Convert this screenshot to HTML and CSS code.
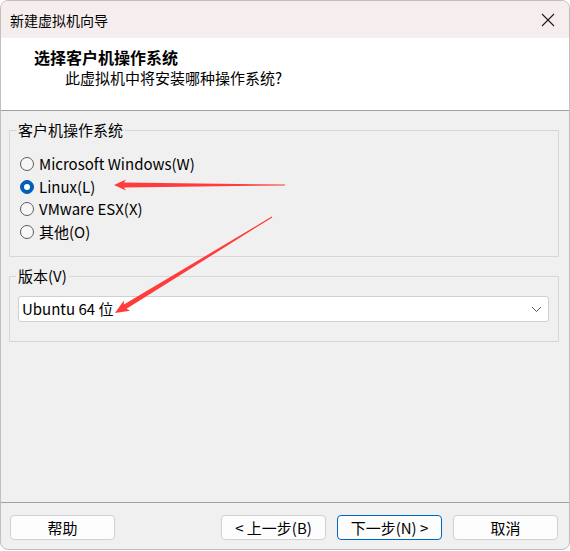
FILE: index.html
```html
<!DOCTYPE html>
<html lang="zh-CN">
<head>
<meta charset="utf-8">
<title>新建虚拟机向导</title>
<link rel="stylesheet" href="styles.css">
</head>
<body>
<div class="window">
  <div class="titlebar">
    <span class="title">新建虚拟机向导</span>
    <svg class="close" width="14" height="14" viewBox="0 0 14 14"><path d="M1 1L13 13M13 1L1 13" stroke="#1b1b1b" stroke-width="1.1" fill="none"/></svg>
  </div>
  <div class="header">
    <div class="h-title">选择客户机操作系统</div>
    <div class="h-sub">此虚拟机中将安装哪种操作系统?</div>
  </div>
  <div class="content">
    <fieldset class="group">
      <legend>客户机操作系统</legend>
      <div class="radios">
        <div class="radio-row"><span class="radio"></span><span>Microsoft Windows(W)</span></div>
        <div class="radio-row"><span class="radio checked"></span><span>Linux(L)</span></div>
        <div class="radio-row"><span class="radio"></span><span>VMware ESX(X)</span></div>
        <div class="radio-row"><span class="radio"></span><span>其他(O)</span></div>
      </div>
    </fieldset>
    <fieldset class="group">
      <legend>版本(V)</legend>
      <div class="version">
        <div class="combo">
          <span>Ubuntu 64 位</span>
          <svg class="chev" width="11" height="7" viewBox="0 0 11 7"><path d="M1 1L5.5 5.5L10 1" stroke="#5a5a5a" stroke-width="1" fill="none"/></svg>
        </div>
      </div>
    </fieldset>
  </div>
  <div class="footer">
    <div class="btn">帮助</div>
    <div class="spacer"></div>
    <div class="btn">&lt; 上一步(B)</div>
    <div class="btn primary">下一步(N) &gt;</div>
    <div class="btn">取消</div>
  </div>
  <svg class="annot" width="570" height="550" viewBox="0 0 570 550">
    <polygon fill="#ff3b3b" points="114,185 126,179.5 124,182.6 285,184.6 285,185.4 124,187.4 126,190.5"/>
    <polygon fill="#ff3b3b" points="115,313 123.8,300.6 123.9,304.6 271.7,216.6 272.3,217.4 126.5,308.8 130.1,310.8"/>
  </svg>
</div>
</body>
</html>
```

FILE: styles.css
```css
html, body {
  margin: 0;
  padding: 0;
  background: #ffffff;
}

body {
  font-family: "Microsoft YaHei UI", "Noto Sans CJK SC", sans-serif;
  font-size: 15px;
  color: #000000;
}

.window {
  position: relative;
  width: 570px;
  height: 550px;
  box-sizing: border-box;
  border: 1px solid #bfbfbf;
  border-radius: 8px;
  overflow: hidden;
  background: #f0f0f0;
  display: flex;
  flex-direction: column;
}

.titlebar {
  height: 37px;
  flex: none;
  background: #f6eeee;
  display: flex;
  align-items: center;
  justify-content: space-between;
  padding: 0 14px 0 9px;
  line-height: 20px;
}

.title {
  font-size: 14px;
}

.close {
  display: block;
}

.header {
  flex: none;
  height: 73px;
  box-sizing: border-box;
  background: #ffffff;
  border-bottom: 1px solid #a0a0a0;
  padding: 9px 0 0 33px;
}

.h-title {
  font-weight: bold;
  font-size: 16px;
  line-height: 20px;
}

.h-sub {
  line-height: 20px;
  margin-top: 1px;
  padding-left: 31px;
}

.content {
  flex: 1;
  padding: 9px 10px 0 8px;
  display: flex;
  flex-direction: column;
  gap: 9px;
}

.group {
  margin: 0;
  padding: 0;
  border: 1px solid #d7d7d7;
  min-width: 0;
}

.group legend {
  margin-left: 6px;
  padding: 0 2px;
  line-height: 20px;
}

.radios {
  padding: 13px 0 13px 10px;
}

.radio-row {
  height: 22.5px;
  display: flex;
  align-items: center;
  gap: 5px;
  line-height: 20px;
}

.radio {
  width: 12px;
  height: 12px;
  border: 1px solid #5c5c5c;
  border-radius: 50%;
  background: #f7f7f7;
  flex: none;
  position: relative;
}

.radio.checked {
  background: #005fb8;
  border-color: #005fb8;
}

.radio.checked::after {
  content: "";
  position: absolute;
  left: 3px;
  top: 3px;
  width: 6px;
  height: 6px;
  border-radius: 50%;
  background: #ffffff;
}

.version {
  padding: 10px 9px 19px 8px;
}

.combo {
  height: 26px;
  box-sizing: border-box;
  background: #ffffff;
  border: 1px solid #d0d0d0;
  border-radius: 3px;
  display: flex;
  align-items: center;
  justify-content: space-between;
  padding: 0 6px 0 3px;
  line-height: 20px;
}

.chev {
  display: block;
}

.footer {
  flex: none;
  height: 47px;
  box-sizing: border-box;
  border-top: 1px solid #a0a0a0;
  padding: 12px 11px 0 9px;
  display: flex;
  align-items: flex-start;
  gap: 11px;
}

.spacer {
  flex: 1;
}

.btn {
  width: 105px;
  height: 25px;
  box-sizing: border-box;
  background: #fdfdfd;
  border: 1px solid #d0d0d0;
  border-radius: 4px;
  display: flex;
  align-items: center;
  justify-content: center;
  line-height: 20px;
}

.btn.primary {
  border-color: #0067c0;
}

.annot {
  position: absolute;
  left: -1px;
  top: -1px;
  pointer-events: none;
}
```
